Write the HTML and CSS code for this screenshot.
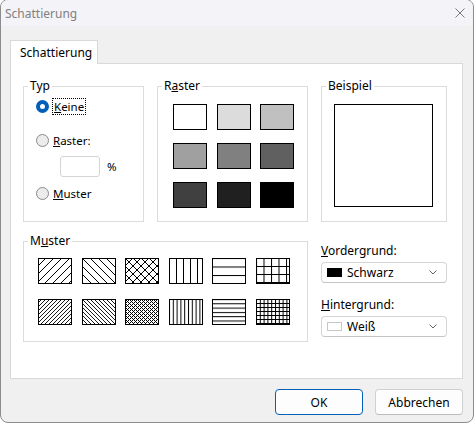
FILE: index.html
```html
<html lang="de">
<head>
  <meta charset="UTF-8">
  <title>Schattierung</title>
  <link rel="stylesheet" href="styles.css">
</head>
<body>

<!-- pattern fills used by the Muster swatches -->
<svg class="defs" width="0" height="0">
  <defs>
    <pattern id="fwd" width="8" height="8" patternUnits="userSpaceOnUse">
      <path d="M-2,2 L2,-2 M0,8 L8,0 M6,10 L10,6" stroke="#000" stroke-width="1"/>
    </pattern>
    <pattern id="back" width="8" height="8" patternUnits="userSpaceOnUse">
      <path d="M-2,6 L2,10 M0,0 L8,8 M6,-2 L10,2" stroke="#000" stroke-width="1"/>
    </pattern>
    <pattern id="cross" width="8" height="8" patternUnits="userSpaceOnUse">
      <path d="M-2,2 L2,-2 M0,8 L8,0 M6,10 L10,6 M-2,6 L2,10 M0,0 L8,8 M6,-2 L10,2" stroke="#000" stroke-width="1"/>
    </pattern>
    <pattern id="vert" x="0" width="7" height="8" patternUnits="userSpaceOnUse">
      <rect x="0" y="0" width="1" height="8" fill="#000"/>
    </pattern>
    <pattern id="horz" y="0" width="8" height="8.5" patternUnits="userSpaceOnUse">
      <rect x="0" y="0" width="8" height="1" fill="#000"/>
    </pattern>
    <pattern id="grid" width="7.5" height="8" patternUnits="userSpaceOnUse">
      <rect x="0" y="0" width="1" height="8" fill="#000"/>
      <rect x="0" y="0" width="7.5" height="1" fill="#000"/>
    </pattern>
    <pattern id="fwd2" width="4" height="4" patternUnits="userSpaceOnUse">
      <path d="M-1,1 L1,-1 M0,4 L4,0 M3,5 L5,3" stroke="#000" stroke-width="0.9"/>
    </pattern>
    <pattern id="back2" width="4" height="4" patternUnits="userSpaceOnUse">
      <path d="M-1,3 L1,5 M0,0 L4,4 M3,-1 L5,1" stroke="#000" stroke-width="0.9"/>
    </pattern>
    <pattern id="cross2" width="4" height="4" patternUnits="userSpaceOnUse">
      <rect x="0" y="0" width="1" height="1" fill="#000"/>
      <rect x="1" y="1" width="1" height="1" fill="#000"/>
      <rect x="2" y="2" width="1" height="1" fill="#000"/>
      <rect x="3" y="3" width="1" height="1" fill="#000"/>
      <rect x="3" y="1" width="1" height="1" fill="#000"/>
      <rect x="1" y="3" width="1" height="1" fill="#000"/>
    </pattern>
    <pattern id="vert2" width="3.8" height="4" patternUnits="userSpaceOnUse">
      <rect x="0" y="0" width="1" height="4" fill="#000"/>
    </pattern>
    <pattern id="horz2" width="4" height="4.3" patternUnits="userSpaceOnUse">
      <rect x="0" y="0" width="4" height="1" fill="#000"/>
    </pattern>
    <pattern id="grid2" width="3.8" height="4" patternUnits="userSpaceOnUse">
      <rect x="0" y="0" width="1" height="4" fill="#000"/>
      <rect x="0" y="0" width="3.8" height="1" fill="#000"/>
    </pattern>
  </defs>
</svg>

<div class="window">
  <div class="titlebar">
    <span class="title">Schattierung</span>
    <svg class="close" width="10" height="10" viewBox="0 0 10 10">
      <path d="M0.5,0.5 L9.5,9.5 M9.5,0.5 L0.5,9.5" stroke="#7a7a7a" stroke-width="1"/>
    </svg>
  </div>

  <div class="content">
    <div class="tabs">
      <div class="tab">Schattierung</div>
    </div>

    <div class="page">
      <fieldset class="group typ">
        <legend>Typ</legend>
        <div class="inner">
          <div class="option first">
            <span class="radio checked"></span>
            <span class="focus"><u>K</u>eine</span>
          </div>
          <div class="option second">
            <span class="radio"></span>
            <span><u>R</u>aster:</span>
          </div>
          <div class="percent">
            <span class="textbox"></span>
            <span>%</span>
          </div>
          <div class="option third">
            <span class="radio"></span>
            <span><u>M</u>uster</span>
          </div>
        </div>
      </fieldset>

      <fieldset class="group raster">
        <legend>R<u>a</u>ster</legend>
        <div class="inner">
          <div class="swatches" id="swatches"></div>
        </div>
      </fieldset>

      <fieldset class="group beispiel">
        <legend>Beispiel</legend>
        <div class="inner">
          <div class="preview"></div>
        </div>
      </fieldset>

      <fieldset class="group muster">
        <legend>M<u>u</u>ster</legend>
        <div class="inner">
          <div class="patterns" id="patterns"></div>
        </div>
      </fieldset>

      <div class="colors">
        <div class="caption"><u>V</u>ordergrund:</div>
        <div class="combo">
          <span class="chip black"></span>
          <span class="combo-text">Schwarz</span>
          <svg class="chevron" width="8" height="5" viewBox="0 0 8 5"><path d="M0.5,0.5 L4,4 L7.5,0.5" fill="none" stroke="#666" stroke-width="1"/></svg>
        </div>
        <div class="caption second"><u>H</u>intergrund:</div>
        <div class="combo">
          <span class="chip white"></span>
          <span class="combo-text">Weiß</span>
          <svg class="chevron" width="8" height="5" viewBox="0 0 8 5"><path d="M0.5,0.5 L4,4 L7.5,0.5" fill="none" stroke="#666" stroke-width="1"/></svg>
        </div>
      </div>
    </div>

    <div class="buttons">
      <button class="btn default">OK</button>
      <button class="btn">Abbrechen</button>
    </div>
  </div>
</div>

<script>
  const greys = ["#ffffff", "#dcdcdc", "#c0c0c0", "#a0a0a0", "#808080", "#606060", "#404040", "#202020", "#000000"];
  const fills = ["fwd", "back", "cross", "vert", "horz", "grid", "fwd2", "back2", "cross2", "vert2", "horz2", "grid2"];

  const swatches = document.getElementById("swatches");
  greys.forEach(color => {
    const cell = document.createElement("div");
    cell.className = "swatch";
    cell.style.background = color;
    swatches.appendChild(cell);
  });

  const patterns = document.getElementById("patterns");
  fills.forEach(id => {
    patterns.innerHTML +=
      `<svg class="pattern" width="34" height="26" viewBox="0 0 34 26">
        <rect x="0" y="0" width="34" height="26" fill="#fff"/>
        <rect x="0" y="0" width="34" height="26" fill="url(#${id})"/>
        <rect x="0.5" y="0.5" width="33" height="25" fill="none" stroke="#000" stroke-width="1"/>
      </svg>`;
  });
</script>

</body>
</html>
```

FILE: styles.css
```css
body {
  margin: 0;
  padding: 0;
  background: #ffffff;
  font-family: "Noto Sans", "Open Sans", sans-serif;
  font-size: 11.5px;
  color: #000;
}

.defs {
  display: block;
  width: 0;
  height: 0;
}

.window {
  box-sizing: border-box;
  width: 474px;
  height: 424px;
  margin-top: -1px;
  border: 1px solid #8c8c8c;
  border-radius: 8px;
  background: #f0f0f0;
  overflow: hidden;
  display: flex;
  flex-direction: column;
}

.titlebar {
  height: 26px;
  background: #f3f3f8;
  display: flex;
  align-items: center;
  justify-content: space-between;
  padding: 0 8px 0 4px;
  flex-shrink: 0;
}

.title {
  color: #808080;
  font-size: 12px;
}

.close {
  display: block;
}

.content {
  flex: 1;
  padding: 14px 10px 0 9px;
  display: flex;
  flex-direction: column;
}

.tabs {
  display: flex;
}

.tab {
  position: relative;
  z-index: 1;
  width: 88px;
  box-sizing: border-box;
  height: 24px;
  margin-bottom: -1px;
  padding: 3px 0 0 9px;
  background: #fff;
  border: 1px solid #d9d9d9;
  border-bottom: none;
  font-size: 12px;
}

.page {
  box-sizing: border-box;
  height: 316px;
  background: #fff;
  border: 1px solid #d9d9d9;
  padding: 14px 14px 0 12px;
  display: grid;
  grid-template-columns: 121px 151px 126px;
  grid-template-rows: 144px 109px;
  column-gap: 13px;
  row-gap: 11px;
}

.group {
  margin: 0;
  padding: 0;
  min-width: 0;
  border: 1px solid #dcdcdc;
}

.group legend {
  margin-left: 4px;
  padding: 0 2px;
  line-height: 16px;
  font-size: 12px;
}

/* Typ */
.typ .inner {
  padding-left: 12px;
}

.option {
  display: flex;
  align-items: center;
  gap: 4px;
  height: 20px;
}

.option.first {
  margin-top: 2px;
}

.option.second {
  margin-top: 14px;
}

.option.third {
  margin-top: 6px;
}

.radio {
  box-sizing: border-box;
  width: 13px;
  height: 13px;
  border-radius: 50%;
  border: 1px solid #8a8a8a;
  background: #ececec;
}

.radio.checked {
  border: 4px solid #005fb8;
  background: #fff;
}

.focus {
  outline: 1px dotted #000;
  padding: 0 1px;
  line-height: 15px;
}

.percent {
  display: flex;
  align-items: center;
  gap: 7px;
  margin: 6px 0 0 24px;
}

.textbox {
  box-sizing: border-box;
  width: 40px;
  height: 21px;
  border: 1px solid #d5d5d5;
  border-radius: 3px;
  background: #fff;
}

/* Raster */
.raster .inner {
  padding: 10px 0 0 15px;
}

.swatches {
  display: grid;
  grid-template-columns: repeat(3, 34px);
  grid-auto-rows: 26px;
  column-gap: 9.5px;
  row-gap: 13px;
}

.swatch {
  box-sizing: border-box;
  border: 1px solid #000;
}

/* Beispiel */
.beispiel .inner {
  padding: 10px 0 0 12px;
}

.preview {
  box-sizing: border-box;
  width: 99px;
  height: 103px;
  border: 1px solid #000;
}

/* Muster */
.muster {
  grid-column: 1 / 3;
}

.muster .inner {
  padding: 9px 0 0 14px;
}

.patterns {
  display: grid;
  grid-template-columns: repeat(6, 34px);
  grid-auto-rows: 26px;
  column-gap: 9.6px;
  row-gap: 15px;
}

.pattern {
  display: block;
  shape-rendering: crispEdges;
}

/* Vordergrund / Hintergrund */
.colors {
  padding-top: 10px;
}

.caption {
  line-height: 16px;
  margin-bottom: 3px;
  font-size: 12px;
}

.caption.second {
  margin-top: 14px;
}

.combo {
  box-sizing: border-box;
  height: 21px;
  border: 1px solid #d5d5d5;
  border-bottom-color: #c4c4c4;
  border-radius: 4px;
  background: #fff;
  display: flex;
  align-items: center;
  padding: 0 9px 0 5px;
}

.chip {
  box-sizing: border-box;
  width: 15px;
  height: 9px;
  margin-right: 5px;
}

.chip.black {
  background: #000;
}

.chip.white {
  background: #fff;
  border: 1px solid #c8c8c8;
}

.combo-text {
  flex: 1;
  font-size: 12px;
}

/* Buttons */
.buttons {
  display: flex;
  justify-content: flex-end;
  gap: 12px;
  margin-top: 10px;
}

.btn {
  box-sizing: border-box;
  width: 88px;
  height: 26px;
  border: 1px solid #d0d0d0;
  border-bottom-color: #bcbcbc;
  border-radius: 4px;
  background: #fdfdfd;
  font-family: "Noto Sans", "Open Sans", sans-serif;
  font-size: 12px;
  color: #000;
  padding: 0;
}

.btn.default {
  border: 1px solid #005fb8;
}
```
